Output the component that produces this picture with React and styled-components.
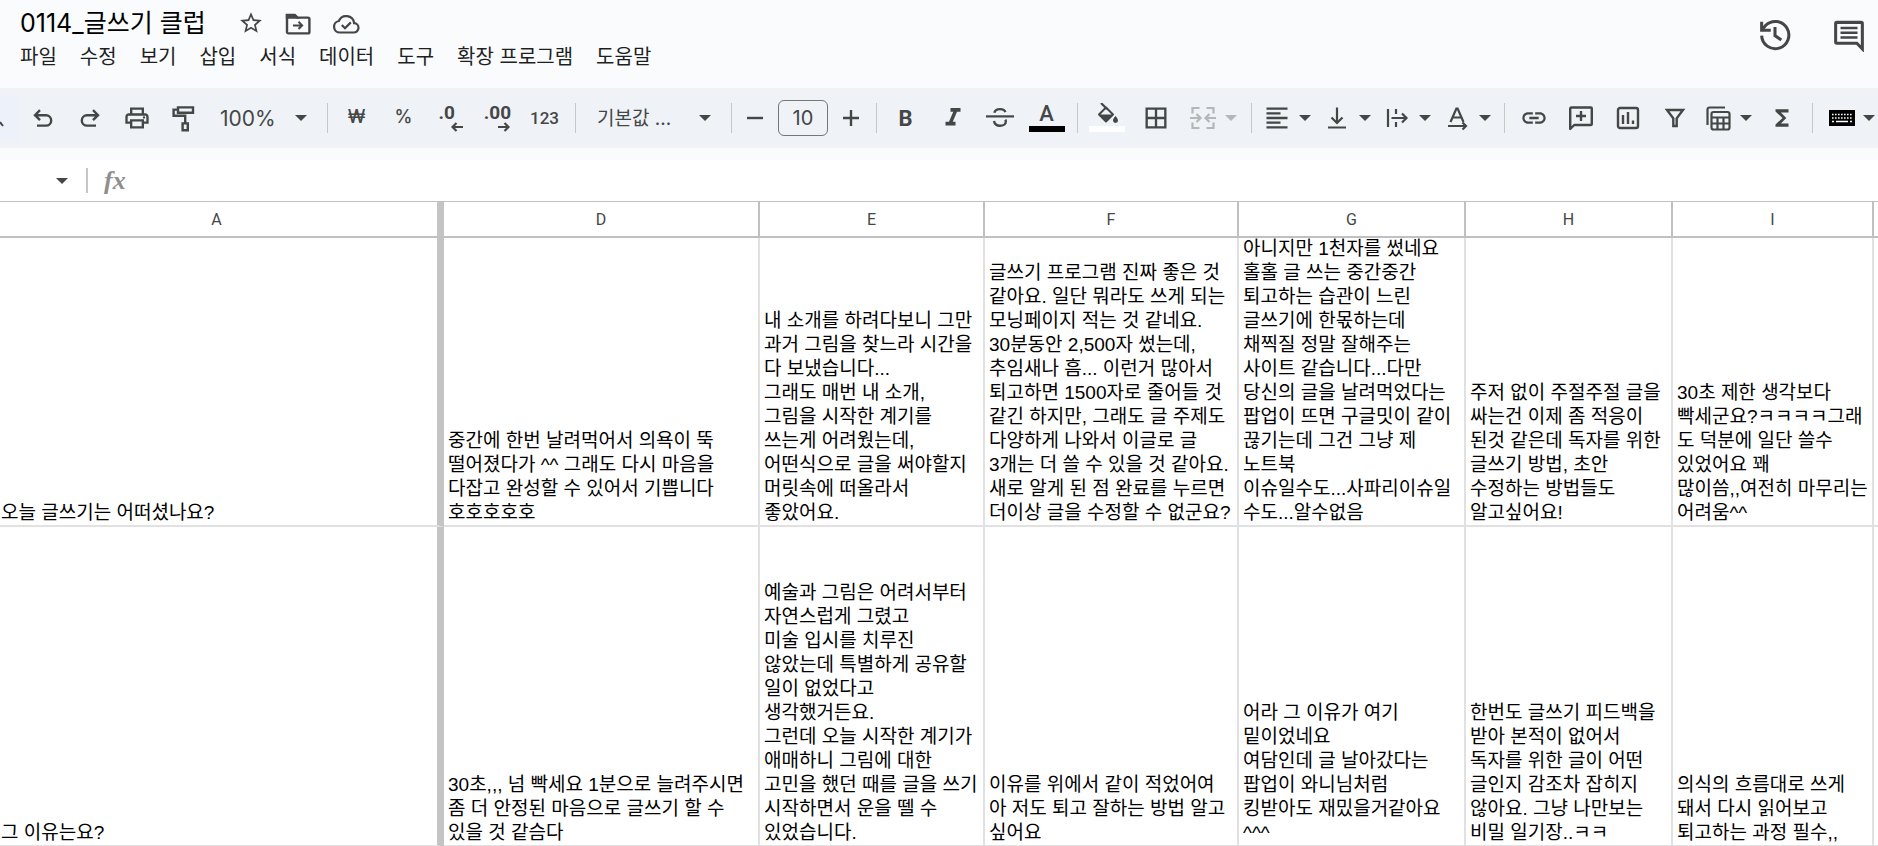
import React from "react";
import styled, { createGlobalStyle } from "styled-components";
import {
  MdStarBorder,
  MdOutlinePrint,
  MdFormatItalic,
  MdBorderAll,
  MdFormatAlignLeft,
  MdLink,
  MdFunctions,
} from "react-icons/md";

const menus = [
  "파일",
  "수정",
  "보기",
  "삽입",
  "서식",
  "데이터",
  "도구",
  "확장 프로그램",
  "도움말",
];

const columns = [
  { name: "A", width: 444 },
  { name: "D", width: 316 },
  { name: "E", width: 225 },
  { name: "F", width: 254 },
  { name: "G", width: 227 },
  { name: "H", width: 207 },
  { name: "I", width: 201 },
  { name: "", width: 0 },
];

const rows = [
  {
    height: 287,
    cells: [
      "오늘 글쓰기는 어떠셨나요?",
      "중간에 한번 날려먹어서 의욕이 뚝\n떨어졌다가 ^^ 그래도 다시 마음을\n다잡고 완성할 수 있어서 기쁩니다\n호호호호호",
      "내 소개를 하려다보니 그만\n과거 그림을 찾느라 시간을\n다 보냈습니다...\n그래도 매번 내 소개,\n그림을 시작한 계기를\n쓰는게 어려웠는데,\n어떤식으로 글을 써야할지\n머릿속에 떠올라서\n좋았어요.",
      "글쓰기 프로그램 진짜 좋은 것\n같아요. 일단 뭐라도 쓰게 되는\n모닝페이지 적는 것 같네요.\n30분동안 2,500자 썼는데,\n추임새나 흠... 이런거 많아서\n퇴고하면 1500자로 줄어들 것\n같긴 하지만, 그래도 글 주제도\n다양하게 나와서 이글로 글\n3개는 더 쓸 수 있을 것 같아요.\n새로 알게 된 점 완료를 누르면\n더이상 글을 수정할 수 없군요?",
      "아니지만 1천자를 썼네요\n홀홀 글 쓰는 중간중간\n퇴고하는 습관이 느린\n글쓰기에 한몫하는데\n채찍질 정말 잘해주는\n사이트 같습니다...다만\n당신의 글을 날려먹었다는\n팝업이 뜨면 구글밋이 같이\n끊기는데 그건 그냥 제\n노트북\n이슈일수도...사파리이슈일\n수도...알수없음",
      "주저 없이 주절주절 글을\n싸는건 이제 좀 적응이\n된것 같은데 독자를 위한\n글쓰기 방법, 초안\n수정하는 방법들도\n알고싶어요!",
      "30초 제한 생각보다\n빡세군요?ㅋㅋㅋㅋ그래\n도 덕분에 일단 쓸수\n있었어요 꽤\n많이씀,,여전히 마무리는\n어려움^^",
      "",
    ],
  },
  {
    height: 318,
    cells: [
      "그 이유는요?",
      "30초,,, 넘 빡세요 1분으로 늘려주시면\n좀 더 안정된 마음으로 글쓰기 할 수\n있을 것 같슴다",
      "예술과 그림은 어려서부터\n자연스럽게 그렸고\n미술 입시를 치루진\n않았는데 특별하게 공유할\n일이 없었다고\n생각했거든요.\n그런데 오늘 시작한 계기가\n애매하니 그림에 대한\n고민을 했던 때를 글을 쓰기\n시작하면서 운을 뗄 수\n있었습니다.",
      "이유를 위에서 같이 적었어여\n아 저도 퇴고 잘하는 방법 알고\n싶어요",
      "어라 그 이유가 여기\n밑이었네요\n여담인데 글 날아갔다는\n팝업이 와니님처럼\n킹받아도 재밌을거같아요\n^^^",
      "한번도 글쓰기 피드백을\n받아 본적이 없어서\n독자를 위한 글이 어떤\n글인지 감조차 잡히지\n않아요. 그냥 나만보는\n비밀 일기장..ㅋㅋ",
      "의식의 흐름대로 쓰게\n돼서 다시 읽어보고\n퇴고하는 과정 필수,,",
      "",
    ],
  },
];

// line icon on a 28px grid
const Icon = ({ size = 28, stroke = 2.4, children }) => (
  <svg
    width={size}
    height={size}
    viewBox="0 0 28 28"
    fill="none"
    stroke="currentColor"
    strokeWidth={stroke}
    aria-hidden="true"
  >
    {children}
  </svg>
);

const Caret = () => (
  <CaretSvg width="12" height="6" viewBox="0 0 12 6" aria-hidden="true">
    <path d="M0 0h12L6 6z" fill="currentColor" />
  </CaretSvg>
);

const Undo = () => (
  <Icon>
    <path d="M11 6.2 6 11.2l5 5M6.4 11.2H17a5.2 5.2 0 0 1 0 10.4H8" />
  </Icon>
);

const Redo = () => (
  <Icon>
    <path d="m17 6.2 5 5-5 5M21.6 11.2H11a5.2 5.2 0 0 0 0 10.4h9" />
  </Icon>
);

const PaintRoller = () => (
  <Icon>
    <path d="M8 3.4h15v5.4H8zM8 5.6H3.6v6.2h11.6v7M12.6 19.4h5.2v6.8h-5.2z" />
  </Icon>
);

const Strikethrough = () => (
  <Icon>
    <path d="M0 12.4h28" strokeWidth="2.2" />
    <path d="M8.4 8.800c.4-2.600 2.800-3.700 5.600-3.700s4.800 1.100 5.400 3.100M8 17c.6 3.300 3 4.800 6 4.800 3.400 0 5.800-1.700 5.800-4.400 0-.6-.1-1.200-.4-1.800" />
  </Icon>
);

const Merge = () => (
  <Icon stroke={2.2}>
    <path d="M10.5 4H3.5v5.500M10.5 24H3.5v-5.500M17.5 4h7v5.500M17.5 24h7v-5.500" />
    <path d="M1 14h10M7.5 10l4 4-4 4M27 14H17M20.500 10l-4 4 4 4" />
  </Icon>
);

const AlignBottom = () => (
  <Icon stroke={2.2}>
    <path d="M14 3.500v15M8.500 13.500l5.500 5.500 5.500-5.500M5 23.500h18" />
  </Icon>
);

const Wrap = () => (
  <Icon stroke={2.2}>
    <path d="M5 5v18M13 5v5M13 18v5M8.500 14h15M19 9.500l4.500 4.500-4.500 4.500" />
  </Icon>
);

const Rotate = () => (
  <Icon stroke={2.2}>
    <path d="M7.500 18 13.400 4.500h1.200L20.500 18M9.500 13.500h9" />
    <path d="M5 22h18M19.500 18.500l3.500 3.500-3.500 3.500" />
  </Icon>
);

const AddComment = () => (
  <Icon>
    <path
      d="M3.200 25V4.500a1 1 0 0 1 1-1h19.600a1 1 0 0 1 1 1v15.500a1 1 0 0 1-1 1H7.200z"
      strokeLinejoin="round"
    />
    <path d="M14 7v10M9 12h10" />
  </Icon>
);

const Chart = () => (
  <Icon>
    <rect x="4" y="4" width="20" height="20" rx="2" />
    <path d="M9 11v9M14 8v12M19 16.500v3.500" />
  </Icon>
);

const Filter = () => (
  <Icon>
    <path d="M6 6h16l-6.300 8.300V22h-3.400v-7.700z" />
  </Icon>
);

const TableViews = () => (
  <Icon stroke={2.2}>
    <path d="M21 3.500H5.500a2 2 0 0 0-2 2V21" />
    <rect x="7.500" y="8" width="18" height="17.500" rx="2" />
    <path d="M7.500 13.500h18M7.500 19.500h18M13.500 13.500v12M19.500 13.500v12" />
  </Icon>
);

const Keyboard = () => (
  <svg width="26" height="16" viewBox="0 0 26 16" aria-hidden="true">
    <path d="M0 0h26v16H0z" fill="#000" />
    <path
      d="M3 4.500h20M3 8h20"
      stroke="#fff"
      strokeWidth="1.600"
      strokeDasharray="1.600 1.400"
    />
    <path
      d="M3 11.500h2M7 11.500h12M21 11.500h2"
      stroke="#fff"
      strokeWidth="1.400"
    />
  </svg>
);

const Bucket = () => (
  <svg width="24" height="22" viewBox="0 0 24 22" aria-hidden="true">
    <path
      d="M4 11.500 11 4.500l7 7-7 7z"
      fill="none"
      stroke="currentColor"
      strokeWidth="2"
      strokeLinejoin="round"
    />
    <path
      d="M4 11.500h14l-7 7zM20.500 13s2.500 2.700 2.500 4.400a2.500 2.500 0 0 1-5 0c0-1.700 2.500-4.400 2.500-4.400z"
      fill="currentColor"
    />
    <path d="m6 0 6 6" stroke="currentColor" strokeWidth="2.200" />
  </svg>
);

const Decimal = ({ more }) => (
  <DecimalLabel $more={more}>
    {more ? ".00" : ".0"}
    <svg width="12" height="10" viewBox="0 0 12 10" aria-hidden="true">
      <path
        d={more ? "M0 5h11M6.500 1l4 4-4 4" : "M12 5H1M5.500 1l-4 4 4 4"}
        fill="none"
        stroke="currentColor"
        strokeWidth="2.200"
      />
    </svg>
  </DecimalLabel>
);

const Folder = () => (
  <Icon>
    <path d="M3 6.200h8l2.400 2.400H24a1.400 1.400 0 0 1 1.400 1.400v13a1.400 1.400 0 0 1-1.400 1.400H4.400A1.400 1.400 0 0 1 3 23z" />
    <path d="M3 6h7.500L13 8.500H3z" fill="currentColor" />
    <path d="M9 16.400h8.500M14.500 12.800l3.600 3.600-3.600 3.600" strokeWidth="2" />
  </Icon>
);

const CloudDone = () => (
  <Icon stroke={2.2}>
    <path d="M8 23.500h13.500a4.700 4.700 0 0 0 .600-9.400A8 8 0 0 0 6.800 12 5.800 5.800 0 0 0 8 23.500z" />
    <path d="m9.800 16 3.200 3.200 5.800-5.800" />
  </Icon>
);

const History = () => (
  <Icon size={34} stroke={2.5}>
    <path d="M3 14.500A11.200 11.200 0 1 0 6.200 6.200L4 8.800" />
    <path d="M3 3v7h7.500M14 7.500V14.500l5.200 3.600" />
  </Icon>
);

const Comments = () => (
  <Icon size={34} stroke={2.5}>
    <path d="M25 25.500V4.600a1 1 0 0 0-1-1H4a1 1 0 0 0-1 1v15.200a1 1 0 0 0 1 1h16.500z" />
    <path d="M7 8.300h14M7 12.200h14M7 16.100h14" strokeWidth="2" />
  </Icon>
);

const Header = () => (
  <HeaderContainer>
    <HeaderMain>
      <TitleRow>
        <Title>0114_글쓰기 클럽</Title>
        <IconButton aria-label="별표">
          <MdStarBorder size={26} />
        </IconButton>
        <IconButton aria-label="이동">
          <Folder />
        </IconButton>
        <IconButton aria-label="문서 상태">
          <CloudDone />
        </IconButton>
      </TitleRow>
      <MenuBar>
        {menus.map(menu => (
          <MenuButton key={menu}>{menu}</MenuButton>
        ))}
      </MenuBar>
    </HeaderMain>
    <HeaderActions>
      <IconButton aria-label="버전 기록">
        <History />
      </IconButton>
      <IconButton aria-label="댓글">
        <Comments />
      </IconButton>
    </HeaderActions>
  </HeaderContainer>
);

const Toolbar = () => (
  <ToolbarContainer role="toolbar">
    <SearchButton aria-label="메뉴 검색">
      <svg width="4" height="6" viewBox="0 0 4 6">
        <path d="M0 1l3 4" stroke="currentColor" strokeWidth="2" />
      </svg>
    </SearchButton>
    <ToolButton aria-label="실행취소">
      <Undo />
    </ToolButton>
    <ToolButton aria-label="재실행">
      <Redo />
    </ToolButton>
    <ToolButton aria-label="인쇄">
      <MdOutlinePrint size={28} />
    </ToolButton>
    <ToolButton aria-label="서식 복사">
      <PaintRoller />
    </ToolButton>
    <SelectLabel>
      <ZoomSelect aria-label="확대/축소" defaultValue="100%">
        <option>100%</option>
      </ZoomSelect>
      <Caret />
    </SelectLabel>
    <Separator />
    <SymbolButton aria-label="통화 형식">₩</SymbolButton>
    <SymbolButton aria-label="퍼센트 형식">%</SymbolButton>
    <ToolButton aria-label="소수점 이하 자릿수 감소">
      <Decimal />
    </ToolButton>
    <ToolButton aria-label="소수점 이하 자릿수 증가">
      <Decimal more />
    </ToolButton>
    <ToolButton size={17}>123</ToolButton>
    <Separator />
    <SelectLabel>
      <FontSelect aria-label="글꼴" defaultValue="기본값 ...">
        <option>기본값 ...</option>
      </FontSelect>
      <Caret />
    </SelectLabel>
    <Separator />
    <ToolButton width={36} aria-label="글꼴 크기 줄이기">
      <Icon>
        <path d="M6 14h16" />
      </Icon>
    </ToolButton>
    <SizeInput aria-label="글꼴 크기" defaultValue="10" />
    <ToolButton width={36} aria-label="글꼴 크기 늘리기">
      <Icon>
        <path d="M6 14h16M14 6v16" />
      </Icon>
    </ToolButton>
    <Separator />
    <ToolButton size={22} bold>
      B
    </ToolButton>
    <ToolButton aria-label="기울임꼴">
      <MdFormatItalic size={30} />
    </ToolButton>
    <ToolButton aria-label="취소선">
      <Strikethrough />
    </ToolButton>
    <ColorButton aria-label="텍스트 색상">
      A<ColorBar color="#000" />
    </ColorButton>
    <Separator />
    <ColorButton aria-label="채우기 색상">
      <Bucket />
      <ColorBar color="#fff" />
    </ColorButton>
    <ToolButton width={52} aria-label="테두리">
      <MdBorderAll size={28} />
    </ToolButton>
    <ToolButton width={62} disabled aria-label="셀 병합">
      <Merge />
      <Caret />
    </ToolButton>
    <Separator />
    <ToolButton width={60} aria-label="가로 맞춤">
      <MdFormatAlignLeft size={28} />
      <Caret />
    </ToolButton>
    <ToolButton width={60} aria-label="세로 맞춤">
      <AlignBottom />
      <Caret />
    </ToolButton>
    <ToolButton width={60} aria-label="텍스트 줄바꿈">
      <Wrap />
      <Caret />
    </ToolButton>
    <ToolButton width={60} aria-label="텍스트 회전">
      <Rotate />
      <Caret />
    </ToolButton>
    <Separator />
    <ToolButton aria-label="링크 삽입">
      <MdLink size={28} />
    </ToolButton>
    <ToolButton aria-label="댓글 삽입">
      <AddComment />
    </ToolButton>
    <ToolButton aria-label="차트 삽입">
      <Chart />
    </ToolButton>
    <ToolButton aria-label="필터 만들기">
      <Filter />
    </ToolButton>
    <ToolButton width={60} aria-label="필터 보기">
      <TableViews />
      <Caret />
    </ToolButton>
    <ToolButton aria-label="함수">
      <MdFunctions size={26} />
    </ToolButton>
    <Separator />
    <ToolButton width={68} aria-label="입력 도구">
      <Keyboard />
      <Caret />
    </ToolButton>
  </ToolbarContainer>
);

const Sheet = () => (
  <Table>
    <colgroup>
      {columns.map(({ name, width }) => (
        <Col key={name} $width={width} />
      ))}
    </colgroup>
    <thead>
      <tr>
        {columns.map(({ name }) => (
          <HeadCell key={name}>{name}</HeadCell>
        ))}
      </tr>
    </thead>
    <tbody>
      {rows.map(({ height, cells }) => (
        <tr key={cells[0]}>
          {cells.map((text, i) => (
            <Cell key={columns[i].name}>
              <CellText $height={height}>{text}</CellText>
            </Cell>
          ))}
        </tr>
      ))}
    </tbody>
  </Table>
);

const App = () => {
  return (
    <Page>
      <GlobalStyle />
      <Header />
      <Toolbar />
      <FormulaBar>
        <NameBoxButton aria-label="이름 상자">
          <Caret />
        </NameBoxButton>
        <FormulaLabel htmlFor="formula">fx</FormulaLabel>
        <FormulaInput id="formula" />
      </FormulaBar>
      <Sheet />
    </Page>
  );
};

const GlobalStyle = createGlobalStyle`
  * {
    box-sizing: border-box;
  }

  body {
    margin: 0;
    background-color: #f9fbfd;
    font-family: Inter, "Noto Sans CJK KR", sans-serif;
  }

  button, input, select {
    padding: 0;
    border: none;
    background: none;
    color: inherit;
    font-family: inherit;
  }
`;

const Page = styled.div`
  height: 100vh;
  overflow: hidden;
  color: #444746;
`;

const CaretSvg = styled.svg`
  flex: none;
  pointer-events: none;
`;

const HeaderContainer = styled.header`
  display: flex;
  justify-content: space-between;
  height: 88px;
  padding: 6px 12px 0 20px;
`;

const HeaderMain = styled.div`
  display: flex;
  flex-direction: column;
`;

const TitleRow = styled.div`
  display: flex;
  align-items: center;
  gap: 20px;
  height: 34px;
`;

const Title = styled.h1`
  margin: 0 12px 0 0;
  color: #000;
  font-size: 25px;
  font-weight: 400;
  line-height: 34px;
  white-space: nowrap;
`;

const IconButton = styled.button`
  display: flex;
  cursor: pointer;
`;

const MenuBar = styled.nav`
  display: flex;
  gap: 23px;
`;

const MenuButton = styled.button`
  color: #1f1f1f;
  font-size: 20px;
  line-height: 34px;
  white-space: nowrap;
`;

const HeaderActions = styled.div`
  display: flex;
  align-items: flex-start;
  gap: 40px;
  padding-top: 12px;
`;

const ToolbarContainer = styled.div`
  display: flex;
  align-items: center;
  height: 60px;
  overflow: hidden;
  background-color: #eff2f7;
`;

const ToolButton = styled.button.withConfig({
  shouldForwardProp: prop => !["width", "size", "bold"].includes(prop),
})`
  display: flex;
  flex: none;
  align-items: center;
  justify-content: center;
  gap: 8px;
  width: ${props => props.width || 47}px;
  height: 48px;
  color: ${props => (props.disabled ? "#b4b6b8" : "#444746")};
  font-family: Roboto, sans-serif;
  font-size: ${props => props.size || 16}px;
  font-weight: ${props => (props.bold ? 700 : 500)};
  cursor: pointer;
`;

const SymbolButton = styled(ToolButton)`
  padding-bottom: 4px;
  font-family: Inter, sans-serif;
  font-size: 18px;
`;

const DecimalLabel = styled.span`
  display: flex;
  flex-direction: column;
  align-items: ${props => (props.$more ? "center" : "flex-start")};
  font-size: 19px;
  font-weight: 700;
  line-height: 18px;

  svg {
    margin-left: 12px;
  }
`;

const SearchButton = styled.button`
  display: flex;
  flex: none;
  align-items: center;
  width: 19px;
  height: 44px;
  padding-top: 12px;
  background-color: #edf2fa;
`;

const ColorButton = styled(ToolButton)`
  flex-direction: column;
  justify-content: flex-end;
  gap: 1px;
  padding-bottom: 10px;
  font-size: 22px;
  line-height: 22px;
`;

const ColorBar = styled.span`
  flex: none;
  width: 36px;
  height: 6px;
  background-color: ${props => props.color};
`;

const Separator = styled.span`
  flex: none;
  width: 1px;
  height: 30px;
  margin: 0 5px 0 7px;
  background-color: #c7c7c7;
`;

const SelectLabel = styled.label`
  display: flex;
  flex: none;
  align-items: center;
  margin-right: 13px;

  svg {
    margin-left: -12px;
  }
`;

const ZoomSelect = styled.select`
  width: 100px;
  height: 48px;
  padding-left: 13px;
  appearance: none;
  font-size: 21px;
`;

const FontSelect = styled(ZoomSelect)`
  width: 130px;
  padding-left: 16px;
  font-size: 19px;
`;

const SizeInput = styled.input`
  flex: none;
  width: 50px;
  height: 36px;
  margin: 0 5px;
  border: 1px solid #747775;
  border-radius: 6px;
  font-size: 20px;
  text-align: center;
`;

const FormulaBar = styled.div`
  display: flex;
  align-items: center;
  height: 53px;
  border-top: 12px solid #f9fbfd;
  background-color: #fff;
`;

const NameBoxButton = styled.button`
  display: flex;
  align-items: center;
  justify-content: flex-end;
  width: 88px;
  height: 25px;
  padding-right: 18px;
  border-right: 2px solid #c7c7c7;
`;

const FormulaLabel = styled.label`
  padding: 0 16px;
  color: #8f8f8f;
  font-family: "Liberation Serif", serif;
  font-size: 26px;
  font-style: italic;
  font-weight: 700;
  line-height: 30px;
`;

const FormulaInput = styled.input`
  flex: 1;
  height: 36px;
  font-size: 19px;
  outline: none;
`;

const Table = styled.table`
  width: 100%;
  table-layout: fixed;
  border-spacing: 0;
  border-top: 1px solid #c0c0c0;
  background-color: #fff;
`;

const Col = styled.col`
  width: ${props => (props.$width ? `${props.$width}px` : "auto")};
`;

const HeadCell = styled.th`
  height: 36px;
  padding: 0;
  border-right: 2px solid #c0c0c0;
  border-bottom: 2px solid #c0c0c0;
  color: #444746;
  font-family: Roboto, sans-serif;
  font-size: 16px;
  font-weight: 400;

  &:first-child {
    padding-right: 4px;
    border-right: 7px solid #c4c4c4;
  }

  &:last-child {
    border-right: none;
  }
`;

const Cell = styled.td`
  padding: 0 0 0 4px;
  border-right: 2px solid #e1e1e1;
  border-bottom: 2px solid #e1e1e1;

  &:first-child {
    padding-left: 1px;
    border-right: 7px solid #c4c4c4;
  }

  &:last-child {
    border-right: none;
  }
`;

const CellText = styled.div`
  display: flex;
  flex-direction: column;
  justify-content: flex-end;
  height: ${props => props.$height}px;
  overflow: hidden;
  color: #000;
  font-family: "Liberation Sans", "Noto Sans CJK KR", sans-serif;
  font-size: 19px;
  line-height: 24px;
  white-space: pre;
`;

export default App;
